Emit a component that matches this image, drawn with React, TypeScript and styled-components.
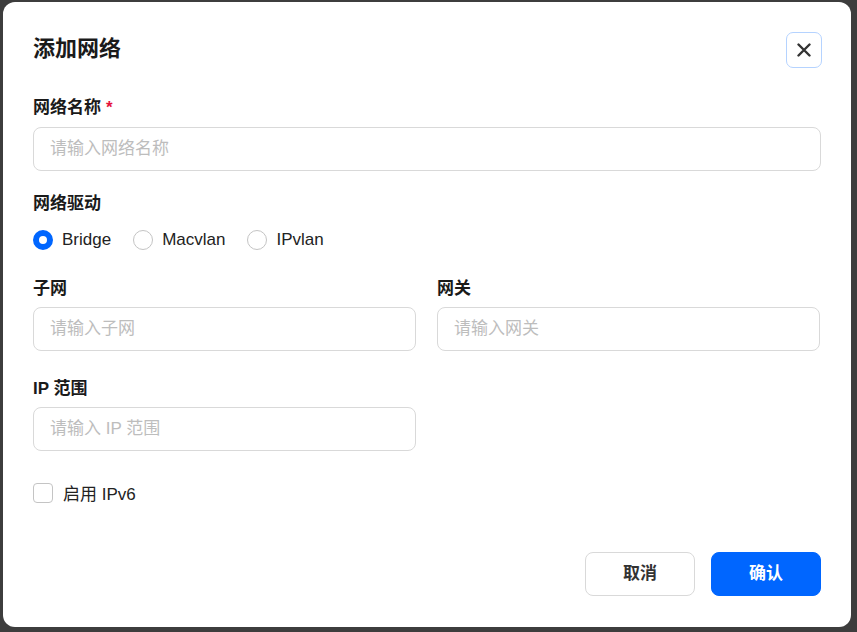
import React, { useState } from 'react';
import styled, { createGlobalStyle } from 'styled-components';

const GlobalStyle = createGlobalStyle`
  html, body {
    margin: 0;
    padding: 0;
    background: #3d3d3d;
  }
  body {
    font-family: "Liberation Sans", "Noto Sans CJK SC", sans-serif;
  }
`;

const Backdrop = styled.div`
  width: 857px;
  height: 632px;
  box-sizing: border-box;
  padding: 2px 6px 5px 3px;
  background: #3d3d3d;
`;

const Dialog = styled.div`
  width: 848px;
  height: 625px;
  box-sizing: border-box;
  background: #fff;
  border-radius: 12px;
  padding: 30px 30px 31px 30px;
  display: flex;
  flex-direction: column;
`;

const Header = styled.div`
  display: flex;
  align-items: center;
  justify-content: space-between;
  height: 36px;
`;

const Title = styled.h2`
  margin: 0;
  font-size: 22px;
  line-height: 30px;
  font-weight: 700;
  color: #1a1a1a;
  position: relative;
  top: -1px;
`;

const CloseButton = styled.button`
  width: 36px;
  height: 36px;
  box-sizing: border-box;
  margin-right: -1px;
  border: 1px solid #b5d3ff;
  border-radius: 7px;
  background: #fff;
  display: flex;
  align-items: center;
  justify-content: center;
  padding: 0;
  cursor: pointer;
`;

const Form = styled.div`
  display: flex;
  flex-direction: column;
  flex: 1;
`;

const Field = styled.div<{ $mt: number }>`
  display: flex;
  flex-direction: column;
  margin-top: ${(p) => p.$mt}px;
  min-width: 0;
`;

const Label = styled.label<{ $mb?: number }>`
  font-size: 17px;
  line-height: 22px;
  font-weight: 700;
  color: #1a1a1a;
  margin-bottom: ${(p) => p.$mb ?? 8}px;
`;

const Required = styled.span`
  color: #e5133d;
  margin-left: 5px;
`;

const Input = styled.input`
  height: 44px;
  box-sizing: border-box;
  border: 1px solid #d9d9d9;
  border-radius: 8px;
  padding: 0 16px;
  font-family: "Liberation Sans", "Noto Sans CJK SC", sans-serif;
  font-size: 17px;
  color: #1a1a1a;
  outline: none;
  width: 100%;
  &::placeholder {
    color: #bdbdbd;
  }
`;

const Grid = styled.div<{ $mt: number }>`
  display: grid;
  grid-template-columns: 383px 383px;
  column-gap: 21px;
  margin-top: ${(p) => p.$mt}px;
`;

const RadioGroup = styled.div`
  display: flex;
  align-items: center;
  gap: 22px;
  margin-top: 6px;
  height: 22px;
`;

const Option = styled.label`
  display: flex;
  align-items: center;
  gap: 9px;
  font-size: 17px;
  color: #222;
  cursor: pointer;
`;

const RadioCircle = styled.span<{ $checked: boolean }>`
  width: 20px;
  height: 20px;
  box-sizing: border-box;
  border-radius: 50%;
  border: ${(p) => (p.$checked ? '6px solid #0066ff' : '1px solid #c4c4c4')};
  background: #fff;
`;

const CheckRow = styled.label`
  display: flex;
  align-items: center;
  gap: 10px;
  margin-top: 29px;
  font-size: 17px;
  color: #222;
  cursor: pointer;
`;

const CheckBox = styled.span`
  width: 20px;
  height: 20px;
  box-sizing: border-box;
  border: 1px solid #c4c4c4;
  border-radius: 4px;
  background: #fff;
`;

const Footer = styled.div`
  display: flex;
  justify-content: flex-end;
  gap: 16px;
`;

const Button = styled.button<{ $primary?: boolean }>`
  width: 110px;
  height: 44px;
  box-sizing: border-box;
  border-radius: 8px;
  font-family: "Liberation Sans", "Noto Sans CJK SC", sans-serif;
  font-size: 17px;
  font-weight: 700;
  line-height: 20px;
  padding: 0;
  cursor: pointer;
  border: 1px solid ${(p) => (p.$primary ? '#0066ff' : '#d9d9d9')};
  background: ${(p) => (p.$primary ? '#0066ff' : '#fff')};
  color: ${(p) => (p.$primary ? '#fff' : '#333')};
`;

const drivers = ['Bridge', 'Macvlan', 'IPvlan'];

const App = () => {
  const [driver, setDriver] = useState('Bridge');
  return (
    <>
      <GlobalStyle />
      <Backdrop>
        <Dialog>
          <Header>
            <Title>添加网络</Title>
            <CloseButton aria-label="关闭">
              <svg width="14" height="14" viewBox="0 0 14 14">
                <path d="M1.5 1.5 L12.5 12.5 M12.5 1.5 L1.5 12.5" stroke="#333" strokeWidth="2.4" strokeLinecap="round" />
              </svg>
            </CloseButton>
          </Header>
          <Form>
            <Field $mt={29}>
              <Label>
                网络名称<Required>*</Required>
              </Label>
              <Input placeholder="请输入网络名称" />
            </Field>
            <Field $mt={22}>
              <Label>网络驱动</Label>
              <RadioGroup>
                {drivers.map((d) => (
                  <Option key={d} onClick={() => setDriver(d)}>
                    <RadioCircle $checked={driver === d} />
                    {d}
                  </Option>
                ))}
              </RadioGroup>
            </Field>
            <Grid $mt={27}>
              <Field $mt={0}>
                <Label $mb={7}>子网</Label>
                <Input placeholder="请输入子网" />
              </Field>
              <Field $mt={0}>
                <Label $mb={7}>网关</Label>
                <Input placeholder="请输入网关" />
              </Field>
            </Grid>
            <Grid $mt={27}>
              <Field $mt={0}>
                <Label $mb={7}>IP 范围</Label>
                <Input placeholder="请输入 IP 范围" />
              </Field>
            </Grid>
            <CheckRow>
              <CheckBox />
              启用 IPv6
            </CheckRow>
          </Form>
          <Footer>
            <Button>取消</Button>
            <Button $primary>确认</Button>
          </Footer>
        </Dialog>
      </Backdrop>
    </>
  );
};

export default App;
